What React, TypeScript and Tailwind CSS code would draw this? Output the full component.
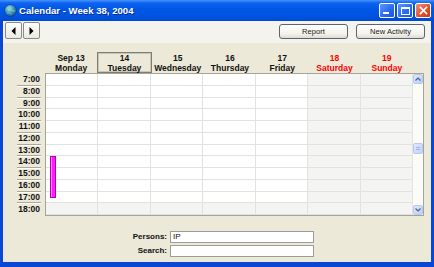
import React from "react";

const days = [
  { d: "Sep 13", n: "Monday", red: false, sel: false },
  { d: "14", n: "Tuesday", red: false, sel: true },
  { d: "15", n: "Wednesday", red: false, sel: false },
  { d: "16", n: "Thursday", red: false, sel: false },
  { d: "17", n: "Friday", red: false, sel: false },
  { d: "18", n: "Saturday", red: true, sel: false },
  { d: "19", n: "Sunday", red: true, sel: false },
];

const hours = ["7:00", "8:00", "9:00", "10:00", "11:00", "12:00", "13:00", "14:00", "15:00", "16:00", "17:00", "18:00"];

function Globe() {
  return (
    <svg width="13" height="13" viewBox="0 0 13 13">
      <defs>
        <radialGradient id="g" cx="40%" cy="35%" r="70%">
          <stop offset="0%" stopColor="#bfe6ff" />
          <stop offset="45%" stopColor="#3f9ad8" />
          <stop offset="100%" stopColor="#164f8c" />
        </radialGradient>
      </defs>
      <circle cx="6.5" cy="6.5" r="6" fill="url(#g)" stroke="#0c3a78" strokeWidth="0.6" />
      <path d="M2 5 Q5 3.5 7 5.5 T11 7" fill="none" stroke="#7fd07a" strokeWidth="1.2" opacity="0.8" />
      <path d="M3 9 Q6 8 8 10" fill="none" stroke="#7fd07a" strokeWidth="1" opacity="0.7" />
    </svg>
  );
}

export default function App() {
  return (
    <div className="w-[434px] h-[267px] flex flex-col bg-[#0a47d6] overflow-hidden font-['Liberation_Sans',Arial,sans-serif]">
      {/* Title bar */}
      <div className="h-[21px] shrink-0 flex items-center pl-[4px] pr-[3px] bg-[linear-gradient(to_bottom,#4a94ff_0%,#0d64f0_14%,#0058e6_40%,#0054e2_75%,#0049d0_100%)]">
        <Globe />
        <span className="ml-[2px] text-white font-bold text-[9.6px] leading-none [text-shadow:1px_1px_0_#0a2a8a]">
          Calendar - Week 38, 2004
        </span>
        <div className="ml-auto flex gap-[2px]">
          <div className="w-[16px] h-[15px] rounded-[2px] border border-white bg-[linear-gradient(135deg,#5a97ff,#2a68f0_60%,#1c55e0)] flex items-end pl-[3px] pb-[3px]">
            <div className="w-[6px] h-[2px] bg-white" />
          </div>
          <div className="w-[16px] h-[15px] rounded-[2px] border border-white bg-[linear-gradient(135deg,#5a97ff,#2a68f0_60%,#1c55e0)] flex items-center justify-center">
            <div className="w-[9px] h-[8px] border border-white border-t-2" />
          </div>
          <div className="w-[16px] h-[15px] rounded-[2px] border border-white bg-[linear-gradient(135deg,#f0947a,#e3532e_55%,#c7391a)] flex items-center justify-center">
            <svg width="9" height="9" viewBox="0 0 9 9">
              <path d="M1.5 1.5 L7.5 7.5 M7.5 1.5 L1.5 7.5" stroke="white" strokeWidth="1.7" strokeLinecap="square" />
            </svg>
          </div>
        </div>
      </div>

      {/* Body */}
      <div className="flex-1 flex flex-col mx-[3px] mb-[5px] bg-[#ece9d8]">
        {/* Toolbar */}
        <div className="h-[22px] shrink-0 flex items-start pl-[2px] pr-[6px] bg-[#f4f3ee]">
          <div className="mt-[1px] flex">
            <div className="w-[17px] h-[17px] rounded-[2px] border border-[#8a8a86] bg-[linear-gradient(to_bottom,#ffffff,#ebe9e0)] flex items-center justify-center">
              <svg width="5" height="8" viewBox="0 0 5 8"><path d="M4.5 0 L0.5 4 L4.5 8 Z" fill="#000" /></svg>
            </div>
            <div className="ml-[1px] w-[17px] h-[17px] rounded-[2px] border border-[#8a8a86] bg-[linear-gradient(to_bottom,#ffffff,#ebe9e0)] flex items-center justify-center">
              <svg width="5" height="8" viewBox="0 0 5 8"><path d="M0.5 0 L4.5 4 L0.5 8 Z" fill="#000" /></svg>
            </div>
          </div>
          <div className="ml-auto mt-[3px] flex gap-[8px]">
            <div className="w-[69px] h-[15px] rounded-[3px] border border-[#5b6472] bg-[linear-gradient(to_bottom,#ffffff,#f2f1ea_70%,#dedcd2)] flex items-center justify-center text-[7.6px] leading-none text-[#222]">
              Report
            </div>
            <div className="w-[69px] h-[15px] rounded-[3px] border border-[#5b6472] bg-[linear-gradient(to_bottom,#ffffff,#f2f1ea_70%,#dedcd2)] flex items-center justify-center text-[7.6px] leading-none text-[#222]">
              New Activity
            </div>
          </div>
        </div>

        {/* Day header */}
        <div className="flex pt-[9px]">
          <div className="w-[42px] shrink-0" />
          <div className="flex w-[368px]">
            {days.map((d) => (
              <div
                key={d.n}
                className={
                  "flex-1 h-[21px] flex flex-col items-center justify-center text-[8.5px] leading-[10px] font-bold " +
                  (d.red ? "text-[#ff0000] " : "text-[#111] ") +
                  (d.sel ? "border border-[#7d7c75] shadow-[inset_0_0_0_1px_#c9c6b6]" : "")
                }
              >
                <span>{d.d}</span>
                <span>{d.n}</span>
              </div>
            ))}
          </div>
        </div>

        {/* Grid row */}
        <div className="flex h-[143px] shrink-0">
          <div className="w-[42px] h-[143px] shrink-0 grid grid-rows-12 py-[1px] overflow-hidden">
            {hours.map((h, i) => (
              <div
                key={h}
                className={
                  "min-h-0 ml-[14px] mr-[4px] flex items-center justify-end pr-[1px] text-[8.5px] leading-none font-bold text-[#111] " +
                  (i < 11 ? "border-b border-[#aca899] shadow-[0_1px_0_#ffffff]" : "")
                }
              >
                {h}
              </div>
            ))}
          </div>
          <div className="w-[379px] h-[143px] border border-[#a5a497] flex bg-white">
            <div className="relative flex-1 grid grid-cols-7 grid-rows-12">
              {hours.map((h, r) =>
                days.map((d) => (
                  <div
                    key={h + d.n}
                    className={
                      "min-h-0 border-r border-b border-[#e2e2e0] " +
                      (d.red || r === 11 ? "bg-[#f4f4f2]" : "bg-white")
                    }
                  />
                ))
              )}
              <div className="absolute left-[4px] top-[58.33%] h-[29.3%] w-[6px] border border-[#b000b0] bg-[#ff1cff] shadow-[inset_1px_0_0_#ff8cff]" />
            </div>
            <div className="w-[10px] flex flex-col bg-[#fbfbf8]">
              <div className="h-[10px] rounded-[2px] border border-[#b8c9ef] bg-[linear-gradient(135deg,#dfe8fd,#bccffa)] flex items-center justify-center">
                <svg width="6" height="4" viewBox="0 0 6 4"><path d="M0.5 3.5 L3 1 L5.5 3.5" fill="none" stroke="#4d6185" strokeWidth="1.2" /></svg>
              </div>
              <div className="mt-[59px] h-[11px] rounded-[2px] border border-[#b8c9ef] bg-[linear-gradient(135deg,#dfe8fd,#c1d3fb)] flex flex-col items-center justify-center gap-[1px]">
                <div className="w-[4px] h-[1px] bg-[#9fb4e8]" />
                <div className="w-[4px] h-[1px] bg-[#9fb4e8]" />
              </div>
              <div className="mt-auto h-[10px] rounded-[2px] border border-[#b8c9ef] bg-[linear-gradient(135deg,#dfe8fd,#bccffa)] flex items-center justify-center">
                <svg width="6" height="4" viewBox="0 0 6 4"><path d="M0.5 0.5 L3 3 L5.5 0.5" fill="none" stroke="#4d6185" strokeWidth="1.2" /></svg>
              </div>
            </div>
          </div>
        </div>

        {/* Form */}
        <div className="flex flex-col pt-[15px] gap-[2px]">
          <div className="flex items-center">
            <div className="w-[164px] text-right text-[8px] leading-none font-bold text-[#111]">Persons:</div>
            <div className="ml-[3px] w-[144px] h-[12px] border border-[#9c9c98] bg-white flex items-center pl-[2px] text-[8px] leading-none text-[#111]">
              IP
            </div>
          </div>
          <div className="flex items-center">
            <div className="w-[164px] text-right text-[8px] leading-none font-bold text-[#111]">Search:</div>
            <div className="ml-[3px] w-[144px] h-[12px] border border-[#9c9c98] bg-white" />
          </div>
        </div>
      </div>
    </div>
  );
}
